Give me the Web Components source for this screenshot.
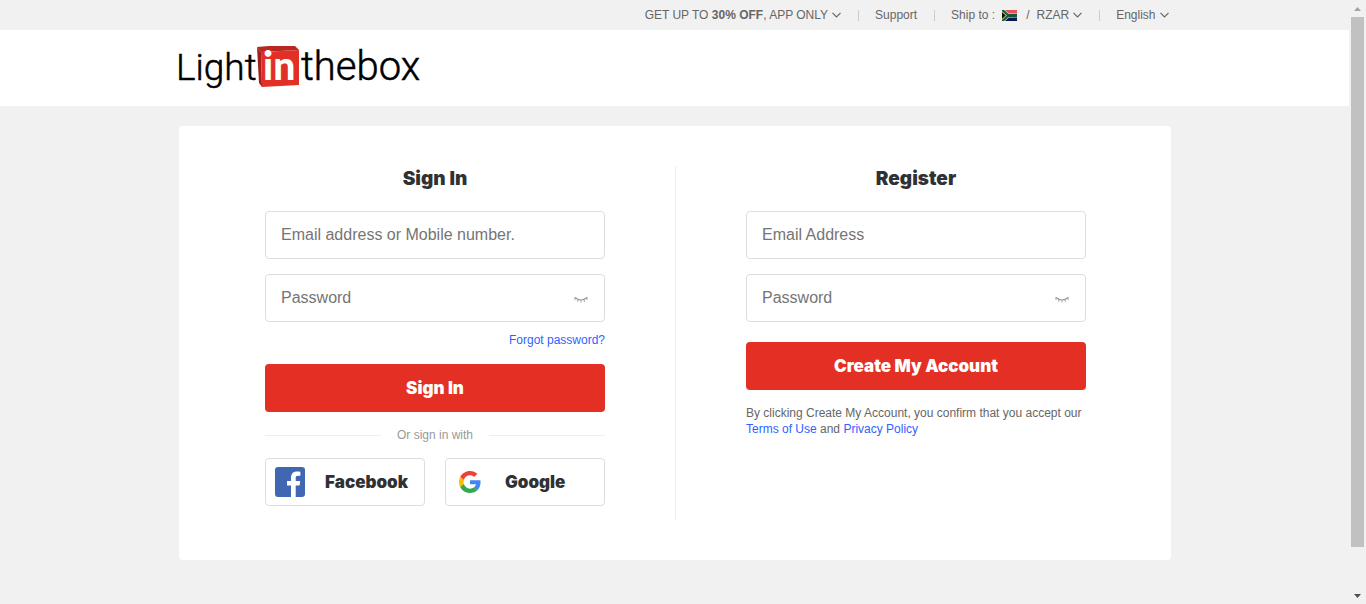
<!DOCTYPE html>
<html lang="en">
<head>
<meta charset="utf-8">
<meta name="viewport" content="width=device-width, initial-scale=1">
<title>Light in the box - Sign In</title>
<style>
  html { scrollbar-width: none; }
  body {
    margin: 0;
    min-height: 100vh;
    background: #f1f1f1;
    color: #666;
    font: 12px/16px "Liberation Sans", Arial, sans-serif;
    --red: #e43024;
    --ink: #2f3133;
    --link: #2f62ff;
    --line: #ddd;
    --display: Inter, "Liberation Sans", sans-serif;
  }
</style>
</head>
<body>
<site-app></site-app>

<script>
const define = (name, html, setup) => {
  const template = document.createElement('template');
  template.innerHTML = html;
  customElements.define(name, class extends HTMLElement {
    constructor() {
      super();
      this.attachShadow({ mode: 'open' }).append(template.content.cloneNode(true));
    }
    connectedCallback() { if (setup) setup(this, this.shadowRoot); }
  });
};

define('menu-trigger', `
  <style>
    :host { display: block; }
    button {
      display: flex; align-items: center; gap: 4px;
      padding: 0; border: 0; background: none;
      color: inherit; font: inherit; cursor: pointer;
    }
    svg { display: block; }
  </style>
  <button type="button" aria-haspopup="true">
    <span><slot></slot></span>
    <svg width="9" height="6" viewBox="0 0 9 6" fill="none" stroke="#666" stroke-width="1.2" aria-hidden="true"><path d="M.5 .8 4.5 4.8 8.5 .8"/></svg>
  </button>`);

define('za-flag', `
  <style>:host { display: inline-block; vertical-align: -2px; } svg { display: block; }</style>
  <svg width="15" height="11" viewBox="0 0 15 11" aria-hidden="true">
    <path fill="#e8505b" d="M0 0h15v4H6z"/><path fill="#0b1550" d="M0 11h15V7H6z"/>
    <path stroke="#e8e8e8" stroke-width="4" fill="none" d="M0 0 6 5.5h9M0 11 6 5.5"/>
    <path stroke="#0f5a3a" stroke-width="2.8" fill="none" d="M0 0 6 5.5h9M0 11 6 5.5"/>
    <path fill="#d9c25a" d="M0 1 5 5.5 0 10z"/><path fill="#111" d="M0 2.200 3.700 5.500 0 8.800z"/>
  </svg>`);

define('top-bar', `
  <style>
    :host { display: block; }
    nav { max-width: 992px; height: 30px; margin: 0 auto; display: flex; align-items: center; justify-content: flex-end; }
    .item { padding: 0 17px 0 16px; }
    .item:last-child { padding-right: 2px; }
    .sep { width: 1px; height: 11px; background: #ccc; }
    .ship { display: flex; align-items: center; gap: 7px; }
    a { color: inherit; text-decoration: none; }
    .slash { padding-left: 2px; }
  </style>
  <nav aria-label="Site">
    <div class="item"><menu-trigger>GET UP TO <b>30% OFF</b>, APP ONLY</menu-trigger></div>
    <span class="sep"></span>
    <div class="item"><a href="#support">Support</a></div>
    <span class="sep"></span>
    <div class="item ship"><span>Ship to :</span><za-flag></za-flag><span class="slash">/</span><menu-trigger>RZAR</menu-trigger></div>
    <span class="sep"></span>
    <div class="item"><menu-trigger>English</menu-trigger></div>
  </nav>`);

define('brand-logo', `
  <style>
    :host { display: flex; }
    a { display: block; }
    svg { display: block; overflow: visible; font-family: Roboto, sans-serif; font-weight: 300; }
    .word { fill: #000; stroke: #000; stroke-width: .5px; }
  </style>
  <a href="#home">
    <svg width="240" height="44" viewBox="0 0 240 44" role="img" aria-label="Light in the box">
      <text class="word" x="-3" y="34" font-size="37">Light</text>
      <path fill="#a51f1a" d="M78 1 82 6 83 41 80 37z"/>
      <path fill="#b82722" d="M78 1 90 0h26l4 4L82 6z"/>
      <path fill="#e33026" d="M82 6 120 4v35L83 41z"/>
      <text x="84" y="34" font-size="39" fill="#fff" font-family="Lato" font-weight="900">in</text>
      <text class="word" x="122" y="34" font-size="40">thebox</text>
    </svg>
  </a>`);

define('site-header', `
  <style>
    :host { display: block; background: #fff; }
    div { max-width: 992px; margin: 0 auto; padding: 16px 0; }
  </style>
  <div><brand-logo></brand-logo></div>`);

define('text-field', `
  <style>
    :host { display: block; }
    .box { display: flex; align-items: center; height: 46px; border: 1px solid var(--line); border-radius: 4px; background: #fff; }
    input {
      flex: 1; min-width: 0; height: 46px; box-sizing: border-box; padding: 0 15px;
      border: 0; outline: 0; background: none; color: #333; font: 16px/20px "Liberation Sans", Arial, sans-serif;
    }
    input::placeholder { color: #757575; opacity: 1; }
    button { display: flex; padding: 0; margin-right: 16px; border: 0; background: none; cursor: pointer; }
    button[hidden] { display: none; }
  </style>
  <div class="box">
    <input>
    <button type="button" aria-label="Show password" hidden>
      <svg width="14" height="14" viewBox="0 0 14 14" fill="none" stroke="#999" aria-hidden="true">
        <path stroke-width="1.200" d="M1 6.500Q7 11.500 13 6.500"/>
        <path stroke-width=".9" d="M1 6v3M4 8.500 3.500 10.800M7 9.200V11.500M10 8.500 10.500 10.800M13 6v3"/>
      </svg>
    </button>
  </div>`, (host, root) => {
    const input = root.querySelector('input');
    const toggle = root.querySelector('button');
    input.type = host.getAttribute('type') || 'text';
    input.placeholder = host.getAttribute('label');
    input.setAttribute('aria-label', host.getAttribute('label'));
    if (input.type === 'password') {
      toggle.hidden = false;
      toggle.onclick = () => { input.type = input.type === 'password' ? 'text' : 'password'; };
    }
  });

define('primary-button', `
  <style>
    :host { display: block; }
    button {
      display: block; width: 100%; height: 48px; padding: 0; border: 0; border-radius: 4px;
      background: var(--red); color: #fff; font: 900 17px/24px var(--display); cursor: pointer;
    }
  </style>
  <button type="button"><slot></slot></button>`);

define('social-button', `
  <style>
    :host { display: block; flex: 1; }
    button {
      display: flex; align-items: center; gap: 20px; width: 100%; height: 48px; padding: 0 9px;
      border: 1px solid var(--line); border-radius: 4px; background: #fff;
      color: var(--ink); font: 900 17px/24px var(--display); cursor: pointer;
    }
    .icon { display: flex; justify-content: center; width: 30px; }
  </style>
  <button type="button"><span class="icon"><slot name="icon"></slot></span><span><slot></slot></span></button>`);

define('panel-title', `
  <style>
    :host { display: block; margin-bottom: 20px; }
    h2 { margin: 0; text-align: center; color: var(--ink); font: 900 19px/25px var(--display); }
  </style>
  <h2><slot></slot></h2>`);

define('sign-in-form', `
  <style>
    :host { display: block; width: 340px; padding-bottom: 14px; }
    .second { margin-top: 15px; }
    .forgot { margin: 10px 0 16px; text-align: right; }
    a { color: var(--link); text-decoration: none; }
    .or { display: flex; align-items: center; gap: 16px; margin: 15px 0; color: #999; }
    .or::before, .or::after { content: ""; flex: 1; height: 1px; background: #eee; }
    .social { display: flex; gap: 20px; }
    svg { display: block; }
  </style>
  <panel-title>Sign In</panel-title>
  <text-field label="Email address or Mobile number."></text-field>
  <text-field class="second" type="password" label="Password"></text-field>
  <div class="forgot"><a href="#forgot">Forgot password?</a></div>
  <primary-button>Sign In</primary-button>
  <div class="or">Or sign in with</div>
  <div class="social">
    <social-button>
      <svg slot="icon" width="30" height="30" viewBox="0 0 30 30" aria-hidden="true">
        <rect width="30" height="30" rx="3" fill="#4267b2"/>
        <path fill="#fff" d="M16 30V18.500h-4V14h4v-3.400C16 6.700 18.400 4.600 21.900 4.600c1.700 0 3.100.1 3.500.2v4h-2.400c-1.900 0-2.300.9-2.300 2.200v3h4.500l-.6 4.500h-3.900V30z"/>
      </svg>Facebook
    </social-button>
    <social-button>
      <svg slot="icon" width="22" height="22" viewBox="0 0 48 48" aria-hidden="true">
        <path fill="#ea4335" d="M24 9.500c3.540 0 6.710 1.220 9.210 3.600l6.850-6.850C35.900 2.380 30.470 0 24 0 14.620 0 6.510 5.380 2.560 13.220l7.980 6.190C12.430 13.720 17.740 9.500 24 9.500z"/>
        <path fill="#4285f4" d="M46.980 24.550c0-1.570-.15-3.090-.38-4.550H24v9.020h12.940c-.58 2.960-2.260 5.480-4.780 7.180l7.730 6c4.510-4.180 7.090-10.360 7.090-17.650z"/>
        <path fill="#fbbc05" d="M10.530 28.590a14.500 14.500 0 0 1 0-9.180l-7.980-6.190a24 24 0 0 0 0 21.560z"/>
        <path fill="#34a853" d="M24 48c6.480 0 11.930-2.130 15.890-5.810l-7.730-6c-2.150 1.450-4.920 2.300-8.160 2.300-6.260 0-11.570-4.220-13.470-9.910l-7.980 6.190C6.510 42.620 14.620 48 24 48z"/>
      </svg>Google
    </social-button>
  </div>`);

define('register-form', `
  <style>
    :host { display: block; width: 340px; }
    .second { margin: 15px 0 20px; }
    p { margin: 15px 0 0; }
    a { color: var(--link); text-decoration: none; }
  </style>
  <panel-title>Register</panel-title>
  <text-field type="email" label="Email Address"></text-field>
  <text-field class="second" type="password" label="Password"></text-field>
  <primary-button>Create My Account</primary-button>
  <p>By clicking Create My Account, you confirm that you accept our <a href="#terms">Terms of Use</a> and <a href="#privacy">Privacy Policy</a></p>`);

define('account-card', `
  <style>
    :host { display: flex; justify-content: center; gap: 70px; box-sizing: border-box; max-width: 992px; margin: 20px auto; padding: 40px 0 40px 2px; background: #fff; border-radius: 4px; }
    .rule { width: 1px; background: #eee; }
  </style>
  <sign-in-form></sign-in-form>
  <span class="rule"></span>
  <register-form></register-form>`);

define('scroll-rail', `
  <style>
    :host { display: flex; flex-direction: column; width: 17px; height: 100vh; position: sticky; top: 0; background: #f1f1f1; }
    .end { flex: none; display: flex; align-items: center; justify-content: center; height: 17px; }
    .track { flex: 1; padding: 0 2px; }
    .thumb { height: 93%; background: #c1c1c1; }
  </style>
  <span class="end"><svg width="7" height="4" viewBox="0 0 7 4"><path fill="#a3a3a3" d="M3.500 0 7 4H0z"/></svg></span>
  <div class="track"><div class="thumb"></div></div>
  <span class="end"><svg width="7" height="4" viewBox="0 0 7 4"><path fill="#505050" d="M0 0h7L3.500 4z"/></svg></span>`);

define('site-app', `
  <style>
    :host { display: flex; align-items: flex-start; }
    .page { flex: 1; min-width: 0; }
  </style>
  <div class="page">
    <top-bar></top-bar>
    <site-header></site-header>
    <main><account-card></account-card></main>
  </div>
  <scroll-rail aria-hidden="true"></scroll-rail>`);
</script>
</body>
</html>
